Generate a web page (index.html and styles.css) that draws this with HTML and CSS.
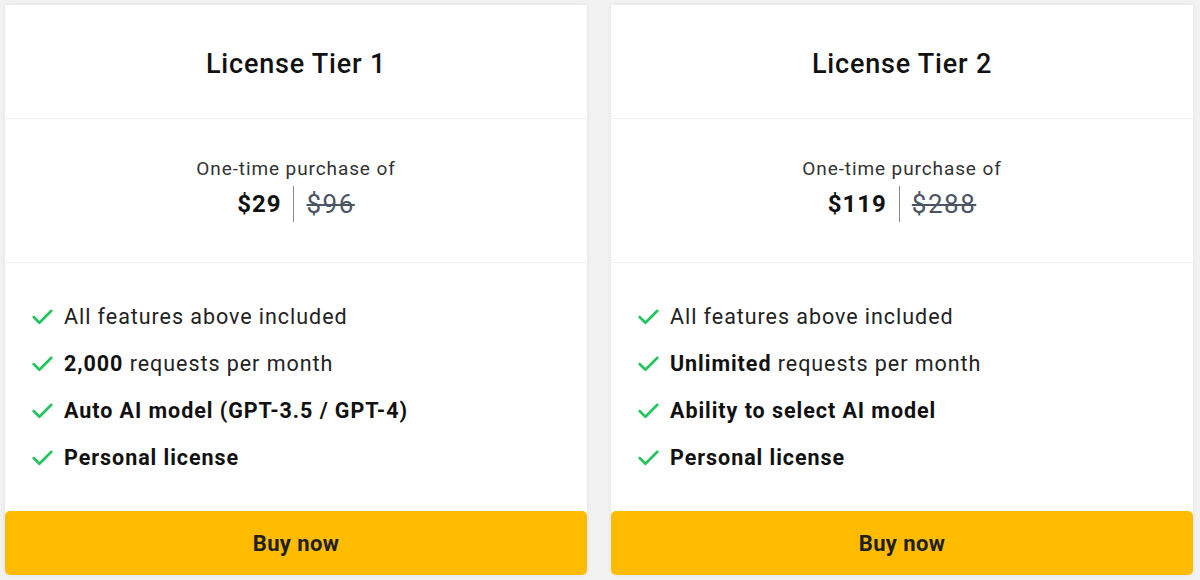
FILE: index.html
```html
<!DOCTYPE html>
<html lang="en">
<head>
<meta charset="utf-8">
<title>License tiers</title>
<link rel="stylesheet" href="styles.css">
</head>
<body>
<div class="plans">
  <div class="card">
    <div class="card-head"><h2 class="title">License Tier 1</h2></div>
    <div class="card-price">
      <div class="price-label">One-time purchase of</div>
      <div class="price-row"><span class="price-now">$29</span><span class="price-sep"></span><span class="price-old">$96</span></div>
    </div>
    <ul class="features">
      <li class="feature"><svg class="check" viewBox="0 0 24 24"><path d="M3.5 12.5l5.5 5.5L20.5 6.5"/></svg><span>All features above included</span></li>
      <li class="feature"><svg class="check" viewBox="0 0 24 24"><path d="M3.5 12.5l5.5 5.5L20.5 6.5"/></svg><span><b>2,000</b> requests per month</span></li>
      <li class="feature"><svg class="check" viewBox="0 0 24 24"><path d="M3.5 12.5l5.5 5.5L20.5 6.5"/></svg><span><b>Auto AI model (GPT-3.5 / GPT-4)</b></span></li>
      <li class="feature"><svg class="check" viewBox="0 0 24 24"><path d="M3.5 12.5l5.5 5.5L20.5 6.5"/></svg><span><b>Personal license</b></span></li>
    </ul>
    <button class="buy">Buy now</button>
  </div>
  <div class="card">
    <div class="card-head"><h2 class="title">License Tier 2</h2></div>
    <div class="card-price">
      <div class="price-label">One-time purchase of</div>
      <div class="price-row"><span class="price-now">$119</span><span class="price-sep"></span><span class="price-old">$288</span></div>
    </div>
    <ul class="features">
      <li class="feature"><svg class="check" viewBox="0 0 24 24"><path d="M3.5 12.5l5.5 5.5L20.5 6.5"/></svg><span>All features above included</span></li>
      <li class="feature"><svg class="check" viewBox="0 0 24 24"><path d="M3.5 12.5l5.5 5.5L20.5 6.5"/></svg><span><b>Unlimited</b> requests per month</span></li>
      <li class="feature"><svg class="check" viewBox="0 0 24 24"><path d="M3.5 12.5l5.5 5.5L20.5 6.5"/></svg><span><b>Ability to select AI model</b></span></li>
      <li class="feature"><svg class="check" viewBox="0 0 24 24"><path d="M3.5 12.5l5.5 5.5L20.5 6.5"/></svg><span><b>Personal license</b></span></li>
    </ul>
    <button class="buy">Buy now</button>
  </div>
</div>
</body>
</html>
```
FILE: styles.css
```css
* { box-sizing: border-box; }
html, body { margin: 0; height: 100%; }
body {
  background: #f2f2f2;
  font-family: Roboto, "Liberation Sans", sans-serif;
  color: #1a1a1a;
  padding: 5px 7px 0 5px;
  overflow: hidden;
}
.plans {
  display: grid;
  grid-template-columns: 1fr 1fr;
  gap: 24px;
}
.card {
  background: #fff;
  border-radius: 0 0 6px 6px;
  box-shadow: 0 0 5px rgba(0,0,0,0.07);
  display: flex;
  flex-direction: column;
  height: 570px;
}
.card-head {
  height: 113px;
  padding-top: 4px;
  display: flex;
  align-items: center;
  justify-content: center;
}
.title {
  margin: 0;
  font-size: 27px;
  font-weight: 500;
  color: #111;
  letter-spacing: 0.8px;
}
.card-price {
  height: 145px;
  border-top: 1px solid #f1f1f1;
  border-bottom: 1px solid #f1f1f1;
  display: flex;
  flex-direction: column;
  align-items: center;
  justify-content: center;
  gap: 5px;
  padding-bottom: 3px;
}
.price-label {
  font-size: 19px;
  color: #333;
  line-height: 24px;
  letter-spacing: 0.9px;
}
.price-row {
  display: flex;
  align-items: center;
  height: 36px;
}
.price-now {
  font-size: 24px;
  font-weight: 700;
  color: #111;
  letter-spacing: 1px;
}
.price-sep {
  width: 1px;
  height: 36px;
  background: #8a8a8a;
  margin: 0 12px;
}
.price-old {
  font-size: 26px;
  color: #4b5563;
  letter-spacing: 1.5px;
  text-decoration: line-through;
  text-decoration-thickness: 2px;
}
.features {
  list-style: none;
  margin: 0;
  padding: 30px 0 0 25px;
  flex: 1;
}
.feature {
  display: flex;
  align-items: center;
  height: 47px;
  font-size: 21.5px;
  color: #222;
  letter-spacing: 0.95px;
}
.feature b { font-weight: 700; color: #111; }
.check {
  width: 25px;
  height: 25px;
  margin-right: 9px;
  fill: none;
  stroke: #22c55e;
  stroke-width: 2.5;
  stroke-linecap: round;
  stroke-linejoin: round;
}
.buy {
  height: 64px;
  border: 0;
  border-radius: 5px;
  background: #ffbb00;
  font-family: Roboto, "Liberation Sans", sans-serif;
  font-size: 22px;
  font-weight: 700;
  color: #1f1f1f;
  letter-spacing: 0.4px;
  cursor: pointer;
}
```
